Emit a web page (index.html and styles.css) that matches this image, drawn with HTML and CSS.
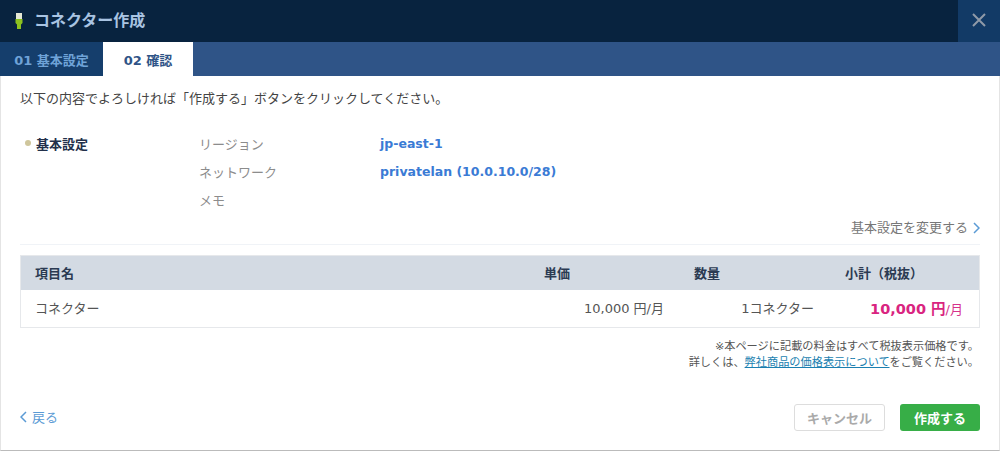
FILE: index.html
```html
<!DOCTYPE html>
<html lang="ja">
  <head>
    <meta charset="UTF-8" />
    <meta name="viewport" content="width=device-width, initial-scale=1.0" />
    <title>コネクター作成</title>
    <link rel="stylesheet" href="styles.css">
  </head>
  <body>
    <div class="modal">
      <header class="modal-header">
        <h1 class="modal-title">
          <svg class="plug-icon" width="10" height="16" viewBox="0 0 10 16">
            <rect x="2" y="0" width="6" height="6" fill="#e4e8d4" />
            <path d="M1.5 6h7v4l-1.5 1.5V16H3v-4.500L1.500 10z" fill="#8cc21f" />
          </svg>
          <span>コネクター作成</span>
        </h1>
        <button class="modal-close" aria-label="閉じる">
          <svg width="14" height="14" viewBox="0 0 14 14">
            <path d="M1 1l12 12M13 1L1 13" stroke="#8f9aa8" stroke-width="2" fill="none" />
          </svg>
        </button>
      </header>
      <nav class="steps">
        <span class="step step-done">01 基本設定</span>
        <span class="step step-current">02 確認</span>
      </nav>
      <main class="modal-body">
        <p class="lead">以下の内容でよろしければ「作成する」ボタンをクリックしてください。</p>
        <section class="summary">
          <h2 class="summary-title">基本設定</h2>
          <dl class="summary-list">
            <div class="summary-row">
              <dt>リージョン</dt>
              <dd>jp-east-1</dd>
            </div>
            <div class="summary-row">
              <dt>ネットワーク</dt>
              <dd>privatelan (10.0.10.0/28)</dd>
            </div>
            <div class="summary-row">
              <dt>メモ</dt>
              <dd></dd>
            </div>
          </dl>
        </section>
        <div class="change-row">
          <a class="change-link" href="#">基本設定を変更する
            <svg width="7" height="12" viewBox="0 0 7 12">
              <path d="M1 1l5 5-5 5" stroke="#5b9bd5" stroke-width="1.5" fill="none" />
            </svg>
          </a>
        </div>
        <div class="price-table">
          <div class="price-row price-head">
            <span class="col-name">項目名</span>
            <span class="col-unit">単価</span>
            <span class="col-qty">数量</span>
            <span class="col-total">小計（税抜）</span>
          </div>
          <div class="price-row price-item">
            <span class="col-name">コネクター</span>
            <span class="col-unit">10,000 円/月</span>
            <span class="col-qty">1コネクター</span>
            <span class="col-total"><b class="amount">10,000 円</b>/月</span>
          </div>
        </div>
        <p class="note">
          ※本ページに記載の料金はすべて税抜表示価格です。<br />
          詳しくは、<a href="#">弊社商品の価格表示について</a>をご覧ください。
        </p>
      </main>
      <footer class="modal-footer">
        <a class="back-link" href="#">
          <svg width="7" height="12" viewBox="0 0 7 12">
            <path d="M6 1L1 6l5 5" stroke="#5b9bd5" stroke-width="1.5" fill="none" />
          </svg>
          戻る
        </a>
        <div class="actions">
          <button class="btn btn-cancel">キャンセル</button>
          <button class="btn btn-submit">作成する</button>
        </div>
      </footer>
    </div>
  </body>
</html>
```

FILE: styles.css
```css
html,
body {
  margin: 0;
  height: 452px;
  overflow: hidden;
}

body {
  font-family: "DejaVu Sans", "Noto Sans CJK JP", sans-serif;
  font-size: 13px;
  color: #444;
  background: #fff;
}

a {
  text-decoration: none;
}

.modal {
  display: flex;
  flex-direction: column;
  height: 451px;
  border-left: 1px solid #e4e4e4;
  border-right: 1px solid #e4e4e4;
  border-bottom: 1px solid #bbb;
  box-sizing: border-box;
}

/* Header */
.modal-header {
  display: flex;
  justify-content: space-between;
  height: 42px;
  margin: 0 -1px;
  background: #08233f;
}

.modal-title {
  display: flex;
  align-items: center;
  gap: 10px;
  margin: 0;
  padding-left: 14px;
  font-size: 16px;
  font-weight: bold;
  color: #a9c4e2;
}

.modal-title span {
  margin-bottom: 4px;
}

.modal-close {
  width: 42px;
  border: 0;
  padding: 0;
  background: #123a66;
}

/* Steps */
.steps {
  display: flex;
  height: 34px;
  margin: 0 -1px;
  background: #2f5487;
}

.step {
  display: flex;
  align-items: center;
  justify-content: center;
  font-size: 13px;
  font-weight: bold;
}

.step-done {
  width: 103px;
  background: #153e6c;
  color: #6fa3d8;
}

.step-current {
  width: 90px;
  background: #fff;
  color: #2f5487;
}

/* Body */
.modal-body {
  flex: 1;
  padding: 0 19px;
}

.lead {
  margin: 14px 0 0;
  line-height: 18px;
}

.summary {
  display: flex;
  margin-top: 21px;
}

.summary-title {
  display: flex;
  align-items: center;
  gap: 5px;
  width: 179px;
  height: 28px;
  margin: 0;
  padding-left: 5px;
  box-sizing: border-box;
  font-size: 13px;
  color: #22304a;
}

.summary-title:before {
  content: "";
  width: 6px;
  height: 6px;
  border-radius: 50%;
  background: #cfc69c;
}

.summary-list {
  margin: 0;
}

.summary-row {
  display: flex;
  height: 28px;
  align-items: center;
}

.summary-row dt {
  width: 181px;
  color: #8c8c8c;
}

.summary-row dd {
  margin: 0;
  font-size: 12.5px;
  font-weight: bold;
  color: #3a7bd5;
}

.change-row {
  display: flex;
  justify-content: flex-end;
  height: 32px;
  padding-top: 6px;
  box-sizing: border-box;
  border-bottom: 1px solid #f0f3f7;
}

.change-link {
  display: flex;
  align-items: flex-start;
  gap: 5px;
  color: #777;
  line-height: 18px;
}

.change-link svg {
  margin-top: 3px;
}

/* Price table */
.price-table {
  margin-top: 10px;
  border: 1px solid #e6e8eb;
}

.price-row {
  display: grid;
  grid-template-columns: 479px 150px 150px 1fr;
  align-items: center;
  padding-left: 14px;
}

.price-head {
  height: 34px;
  padding-bottom: 2px;
  box-sizing: border-box;
  background: #d3dae3;
  font-weight: bold;
  color: #2b3a52;
}

.price-item {
  height: 37px;
  padding-bottom: 2px;
  box-sizing: border-box;
  color: #555;
}

.price-head .col-unit,
.price-head .col-qty {
  text-align: right;
  padding-right: 94px;
}

.price-head .col-total {
  text-align: right;
  padding-right: 56px;
}

.price-item .col-unit,
.price-item .col-qty,
.price-item .col-total {
  text-align: right;
}

.price-item .col-total {
  padding-right: 16px;
  color: #d6328c;
}

.amount {
  font-size: 14.5px;
  color: #d92480;
}

.note {
  margin: 11px 1px 0 0;
  font-size: 11.2px;
  line-height: 16px;
  text-align: right;
  color: #555;
}

.note a {
  color: #1a7fb0;
  text-decoration: underline;
}

/* Footer */
.modal-footer {
  display: flex;
  justify-content: space-between;
  align-items: center;
  padding: 0 19px 19px;
}

.back-link {
  display: flex;
  align-items: center;
  gap: 5px;
  margin-top: -2px;
  color: #5b9bd5;
}

.actions {
  display: flex;
  gap: 15px;
}

.btn {
  height: 27px;
  padding: 0;
  border-radius: 3px;
  font-family: inherit;
  font-size: 13px;
  font-weight: bold;
}

.btn-cancel {
  width: 91px;
  border: 1px solid #ddd;
  background: #fff;
  color: #aaa;
}

.btn-submit {
  width: 80px;
  border: 0;
  background: #37ae47;
  color: #fff;
}
```
